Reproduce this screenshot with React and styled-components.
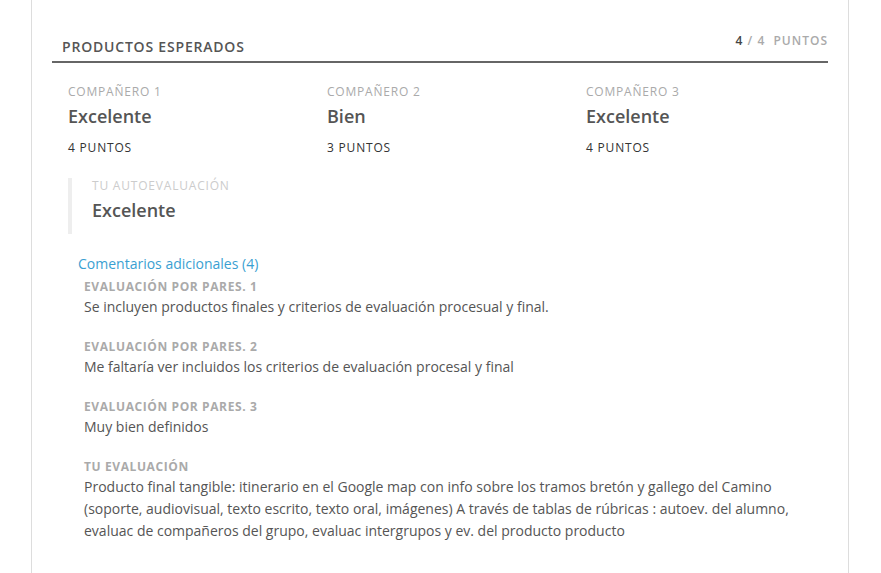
import React from 'react';
import styled, { createGlobalStyle } from 'styled-components';

const GlobalStyle = createGlobalStyle`
  body {
    margin: 0;
    background: #fff;
    font-family: "Open Sans", "Liberation Sans", sans-serif;
  }
`

const Card = styled.div`
  box-sizing: border-box;
  width: 818px;
  min-height: 573px;
  margin-left: 31px;
  padding: 33px 20px 0 20px;
  border-left: 1px solid #ddd;
  border-right: 1px solid #ddd;
  background: #fff;
`

const Header = styled.div`
  display: flex;
  justify-content: space-between;
  align-items: flex-end;
  padding: 0 0 5px 10px;
  border-bottom: 2px solid #666;
`

const Title = styled.h2`
  margin: 0;
  font-size: 14px;
  line-height: 19px;
  font-weight: 600;
  letter-spacing: 0.8px;
  color: #555;
`

const Points = styled.div`
  margin-bottom: 7px;
  font-size: 12px;
  line-height: 16px;
  font-weight: 600;
  letter-spacing: 1px;
  color: #aaa;
  white-space: pre;

  b {
    color: #444;
    font-weight: 600;
  }
`

const PeerRow = styled.div`
  display: grid;
  grid-template-columns: repeat(3, 259px);
  padding-left: 16px;
  margin-top: 21px;
`

const Label = styled.div`
  font-size: 12px;
  line-height: 16px;
  letter-spacing: 0.8px;
  color: ${p => (p.$faint ? '#ccc' : '#aaa')};
  text-transform: uppercase;
`

const Grade = styled.div`
  margin-top: 4px;
  font-size: 18px;
  line-height: 24px;
  font-weight: 600;
  color: #555;
`

const Score = styled.div`
  margin-top: 12px;
  font-size: 12px;
  line-height: 16px;
  letter-spacing: 0.8px;
  color: #333;
`

const SelfBox = styled.div`
  margin: 22px 0 0 16px;
  padding: 0 0 12px 20px;
  border-left: 4px solid #eee;
`

const CommentsLink = styled.a`
  display: block;
  margin: 20px 0 0 26px;
  font-size: 14px;
  line-height: 20px;
  color: #3a9fd2;
  text-decoration: none;
  cursor: pointer;
`

const CommentList = styled.div`
  margin: 5px 0 0 32px;
  display: flex;
  flex-direction: column;
  gap: 21px;
`

const CommentLabel = styled.div`
  font-size: 12px;
  line-height: 16px;
  font-weight: 700;
  letter-spacing: 0.6px;
  color: #aaa;
`

const CommentText = styled.p`
  margin: 1px 0 0 0;
  font-size: 14px;
  line-height: 22px;
  color: #555;
`

const peers = [
  { name: 'Compañero 1', grade: 'Excelente', score: '4 PUNTOS' },
  { name: 'Compañero 2', grade: 'Bien', score: '3 PUNTOS' },
  { name: 'Compañero 3', grade: 'Excelente', score: '4 PUNTOS' },
]

const comments = [
  { by: 'EVALUACIÓN POR PARES. 1', text: 'Se incluyen productos finales y criterios de evaluación procesual y final.' },
  { by: 'EVALUACIÓN POR PARES. 2', text: 'Me faltaría ver incluidos los criterios de evaluación procesal y final' },
  { by: 'EVALUACIÓN POR PARES. 3', text: 'Muy bien definidos' },
  {
    by: 'TU EVALUACIÓN',
    text: 'Producto final tangible: itinerario en el Google map con info sobre los tramos bretón y gallego del Camino (soporte, audiovisual, texto escrito, texto oral, imágenes) A través de tablas de rúbricas : autoev. del alumno, evaluac de compañeros del grupo, evaluac intergrupos y ev. del producto producto',
  },
]

export default function App() {
  return (
    <>
      <GlobalStyle />
      <Card>
        <Header>
          <Title>PRODUCTOS ESPERADOS</Title>
          <Points><b>4</b> / 4  PUNTOS</Points>
        </Header>

        <PeerRow>
          {peers.map(p => (
            <div key={p.name}>
              <Label>{p.name}</Label>
              <Grade>{p.grade}</Grade>
              <Score>{p.score}</Score>
            </div>
          ))}
        </PeerRow>

        <SelfBox>
          <Label $faint>Tu autoevaluación</Label>
          <Grade>Excelente</Grade>
        </SelfBox>

        <CommentsLink>Comentarios adicionales (4)</CommentsLink>

        <CommentList>
          {comments.map(c => (
            <div key={c.by}>
              <CommentLabel>{c.by}</CommentLabel>
              <CommentText>{c.text}</CommentText>
            </div>
          ))}
        </CommentList>
      </Card>
    </>
  )
}
